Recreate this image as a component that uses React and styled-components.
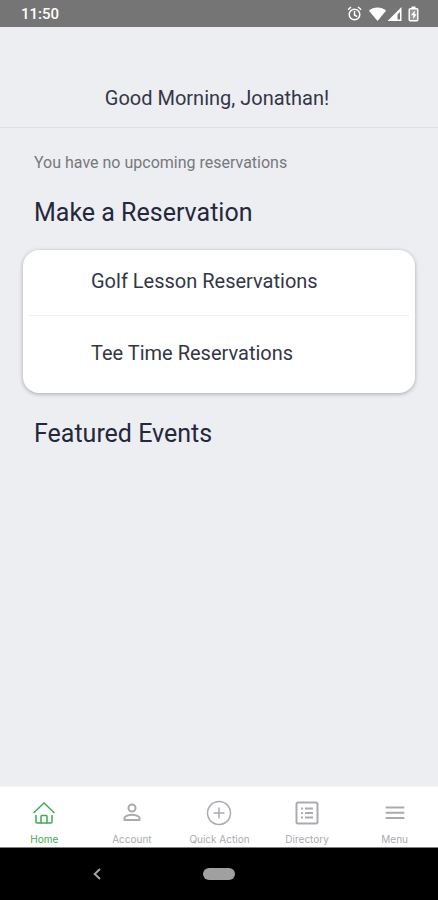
import { useState } from "react";
//styled components
import styled, { createGlobalStyle } from "styled-components";

const reservations = ["Golf Lesson Reservations", "Tee Time Reservations"];

//icons
const HomeIcon = () => (
  <TabIcon viewBox="0 0 28 28" aria-hidden="true">
    <path d="M3.5 14 14 4l10.5 10" />
    <path d="M6 16v7q0 1 1 1h4v-6.5q0-1 1-1h4q1 0 1 1V24h4q1 0 1-1v-7" />
    <path d="M11 24h6" />
  </TabIcon>
);

const AccountIcon = () => (
  <TabIcon viewBox="0 0 28 28" $bold aria-hidden="true">
    <circle cx="14" cy="9" r="3.5" />
    <path d="M6.5 21v-1.8c0-2.300 4.500-3.400 7.500-3.400s7.500 1.100 7.500 3.400V21z" />
  </TabIcon>
);

const ActionIcon = () => (
  <TabIcon viewBox="0 0 28 28" aria-hidden="true">
    <circle cx="14" cy="14" r="11.5" />
    <path d="M14 8.5v11M8.5 14h11" />
  </TabIcon>
);

const DirectoryIcon = () => (
  <TabIcon viewBox="0 0 28 28" $bold aria-hidden="true">
    <rect x="3.5" y="3.5" width="21" height="21" rx="1.5" />
    <path d="M12 9.5h8M12 14h8M12 18.5h8" />
    <path d="M8 9.5h2M8 14h2M8 18.5h2" />
  </TabIcon>
);

const MenuIcon = () => (
  <TabIcon viewBox="0 0 28 28" $bold aria-hidden="true">
    <path d="M4.700 8.5h18.6M4.700 13.7h18.6M4.700 19h18.6" />
  </TabIcon>
);

const tabs = [
  { name: "Home", Icon: HomeIcon },
  { name: "Account", Icon: AccountIcon },
  { name: "Quick Action", Icon: ActionIcon },
  { name: "Directory", Icon: DirectoryIcon },
  { name: "Menu", Icon: MenuIcon },
];

const StatusBar = () => (
  <StatusStyle>
    <time>11:50</time>
    <svg width="72" height="18" viewBox="0 0 72 18" aria-hidden="true">
      {/* alarm */}
      <g fill="none" stroke="#fff" strokeWidth="1.5">
        <circle cx="6.500" cy="9.5" r="5.3" />
        <path d="M6.500 6v4l2.600 1.6M0 4.700 3 2M13.200 4.700 10 2" />
      </g>
      {/* wifi */}
      <path fill="#fff" d="M21 5.800C25.500 1.500 33.500 1.500 38 5.800L29.500 16z" />
      {/* signal */}
      <path fill="#fff" fillRule="evenodd" d="M53.500 2V16H39.500zM52 7l-2.500 2.500V14.500h2.500z" />
      {/* battery */}
      <path fill="#fff" d="M63.500 1.500h4v2h-4z" />
      <rect x="61.2" y="3.7" width="8.6" height="12" rx="1" fill="#9a9a9a" stroke="#fff" strokeWidth="1.4" />
      <path fill="#fff" d="M66.700 5.500 63 10.200h2.200v3.800l3.400-4.800h-1.900z" />
    </svg>
  </StatusStyle>
);

const App = () => {
  //state
  const [active, setActive] = useState("Home");
  return (
    <>
      <GlobalStyle />
      <Screen>
        <StatusBar />
        <Header>
          <h1>Good Morning, Jonathan!</h1>
        </Header>
        <Main>
          <Notice>You have no upcoming reservations</Notice>
          <Heading>Make a Reservation</Heading>
          <Card>
            {reservations.map((name) => (
              <li key={name}>
                <CardButton type="button">{name}</CardButton>
              </li>
            ))}
          </Card>
          <Heading>Featured Events</Heading>
        </Main>
        <TabBar>
          {tabs.map(({ name, Icon }) => (
            <Tab
              key={name}
              type="button"
              $active={active === name}
              aria-current={active === name ? "page" : undefined}
              onClick={() => setActive(name)}
            >
              <Icon />
              <span>{name}</span>
            </Tab>
          ))}
        </TabBar>
        <SystemBar>
          <SystemButton type="button" aria-label="Back">
            <svg width="12" height="14" viewBox="0 0 12 14">
              <path d="M9 2 3.700 7 9 12" fill="none" stroke="#a5a5a5" strokeWidth="2" />
            </svg>
          </SystemButton>
          <SystemButton type="button" aria-label="Home screen">
            <Pill />
          </SystemButton>
        </SystemBar>
      </Screen>
    </>
  );
};

//styled components
const GlobalStyle = createGlobalStyle`
  * {
    margin: 0;
    padding: 0;
    box-sizing: border-box;
  }
  body {
    font-family: Roboto, "Liberation Sans", sans-serif;
    background: #eceef2;
    color: #343647;
  }
  button {
    font: inherit;
    color: inherit;
    background: none;
    border: none;
    cursor: pointer;
  }
`;
const Screen = styled.div`
  min-height: 100vh;
  display: flex;
  flex-direction: column;
`;
const StatusStyle = styled.div`
  display: flex;
  align-items: center;
  justify-content: space-between;
  height: 27px;
  padding: 0 18px 0 21px;
  background: #757575;
  color: #fff;
  font-size: 15px;
  font-weight: 500;
`;
const Header = styled.header`
  padding: 59px 24px 17px 20px;
  border-bottom: 1px solid #dddfe3;
  text-align: center;
  h1 {
    font-size: 20px;
    line-height: 24px;
    font-weight: 400;
  }
`;
const Main = styled.main`
  flex: 1;
  padding: 25px 22px;
`;
const Notice = styled.p`
  padding: 0 12px;
  font-size: 16px;
  line-height: 20px;
  color: #77787c;
`;
const Heading = styled.h2`
  padding: 24px 12px 21px;
  font-size: 25px;
  line-height: 32px;
  font-weight: 400;
  color: #25273b;
`;
const Card = styled.ul`
  list-style: none;
  margin: 0 1px 1px;
  padding: 0 6px 6px;
  border-radius: 16px;
  background: #fff;
  box-shadow: 0 1px 4px rgba(0, 0, 0, 0.3);
  li + li {
    padding-top: 6px;
    border-top: 1px solid #f0f0f2;
  }
`;
const CardButton = styled.button`
  width: 100%;
  padding: 17px 62px 20px;
  font-size: 20px;
  line-height: 28px;
  text-align: left;
`;
const TabBar = styled.nav`
  display: flex;
  background: #fff;
  border-top: 1px solid #f4f5f7;
  border-bottom: 1px solid #808080;
`;
const Tab = styled.button`
  flex: 1 1 0;
  display: flex;
  flex-direction: column;
  align-items: center;
  gap: 6px;
  padding: 12px 0 2px 1px;
  color: ${({ $active }) => ($active ? "#3fab55" : "#a9abb0")};
  span {
    font-family: Inter, sans-serif;
    font-size: 10px;
    line-height: 12px;
    white-space: nowrap;
  }
`;
const TabIcon = styled.svg`
  width: 28px;
  height: 28px;
  fill: none;
  stroke: currentColor;
  stroke-width: ${({ $bold }) => ($bold ? 2 : 1.5)};
`;
const SystemBar = styled.div`
  display: grid;
  grid-template-columns: repeat(9, 1fr);
  align-items: center;
  height: 52px;
  background: #000;
`;
const SystemButton = styled.button`
  display: flex;
  justify-content: center;
  grid-column: 5;
  &:first-child {
    grid-column: 2 / 4;
  }
`;
const Pill = styled.span`
  flex: none;
  width: 32px;
  height: 12px;
  border-radius: 6px;
  background: #a0a0a0;
`;
export default App;
